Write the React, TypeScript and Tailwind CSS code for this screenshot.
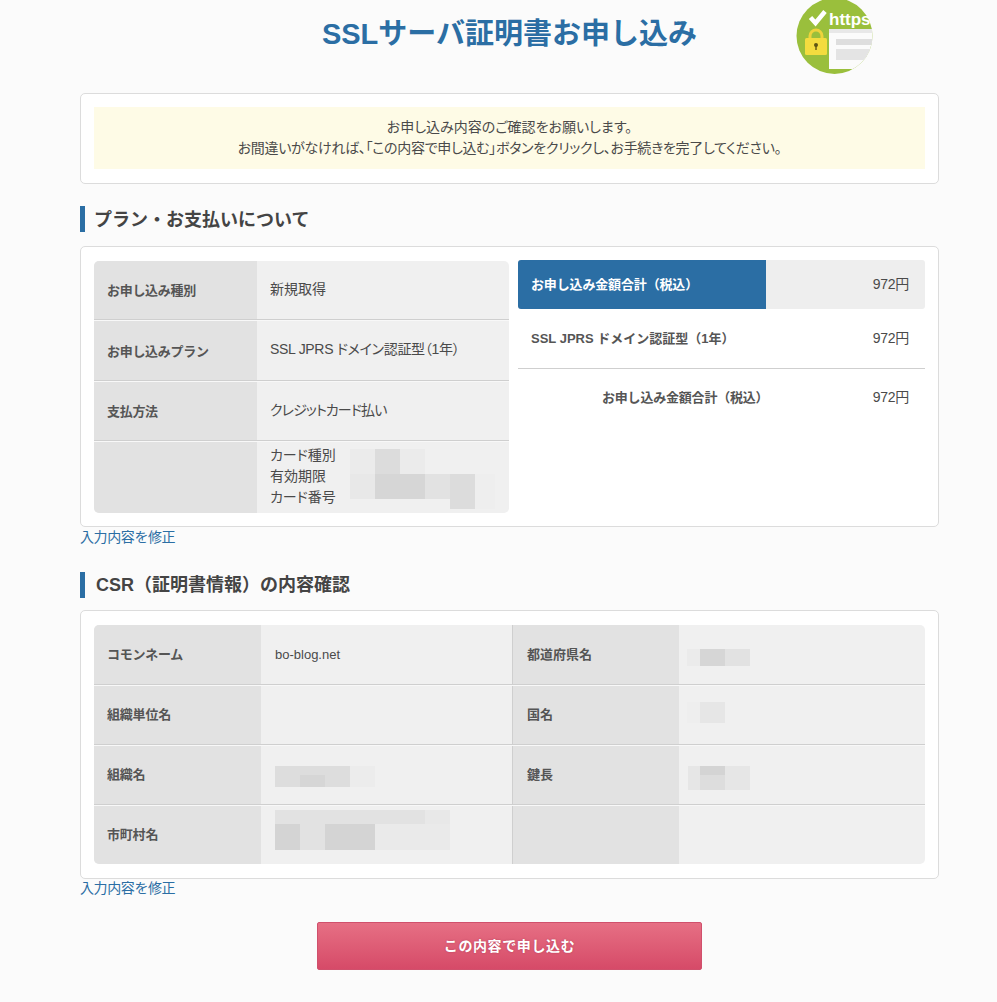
const jp = { fontFamily: '"Liberation Sans","Noto Sans CJK JP",sans-serif' };

function Logo() {
  return (
    <svg width="80" height="76" viewBox="0 0 80 76" className="block">
      <defs>
        <clipPath id="logo-clip"><circle cx="39.500" cy="36" r="38" /></clipPath>
      </defs>
      <circle cx="39.500" cy="36" r="38" fill="#9abf3c" />
      <path d="M15.500 17.500l5 5.500 9.500-11.500" fill="none" stroke="#fff" strokeWidth="4.500" />
      <text x="34" y="25" fill="#fff" fontSize="17" fontWeight="700" fontFamily="Liberation Sans">https</text>
      <path d="M15 40v-4a6 6 0 0 1 12 0v4" fill="none" stroke="#eed33c" strokeWidth="3" />
      <rect x="10" y="38" width="22" height="17" rx="1.500" fill="#f3dc3f" />
      <circle cx="21" cy="45" r="2" fill="#5e5414" />
      <rect x="20.300" y="45" width="1.400" height="5" fill="#5e5414" />
      <g clipPath="url(#logo-clip)">
        <rect x="34" y="29" width="46" height="40" fill="#fbfbfb" />
        <rect x="34" y="29" width="46" height="4" fill="#e8e8e8" />
        <rect x="41" y="39" width="39" height="6" fill="#dedede" />
        <rect x="41" y="49" width="39" height="11" fill="#e4e4e4" />
      </g>
    </svg>
  );
}

function Blur({ rows, h = 0 }: { rows: [number, number, number, number, string][]; h?: number }) {
  return (
    <div className="relative w-full" style={{ height: h }}>
      {rows.map(([x, y, w, hh, c], i) => (
        <div key={i} className="absolute" style={{ left: x, top: y, width: w, height: hh, background: c }} />
      ))}
    </div>
  );
}

function Heading({ children, leading }: { children: React.ReactNode; leading: string }) {
  return (
    <h2 className={`border-l-[5px] border-[#2b6ea4] pl-[9px] h-[26px] ${leading} text-[18px] font-bold text-[#444]`}>
      {children}
    </h2>
  );
}

function Row({ label, last, first, children, h }: { label?: string; last?: boolean; first?: boolean; children?: React.ReactNode; h: string }) {
  return (
    <div className={`flex ${h} ${last ? "" : "border-b border-b-[#cfcfcf]"} ${first ? "" : "border-t border-t-[#f8f8f8]"}`}>
      <div className="w-[163px] shrink-0 bg-[#e2e2e2] pl-[13px] pt-[2px] flex items-center text-[13px] tracking-[-0.3px] font-bold text-[#555]">{label}</div>
      <div className="flex-1 pl-[13px] pb-[2px] flex items-center text-[14px] text-[#4a4a4a] [font-feature-settings:'palt']">{children}</div>
    </div>
  );
}

function CsrRow({ left, right, last, first, h, leftVal, rightVal }: { left: string; right?: string; last?: boolean; first?: boolean; h: string; leftVal?: React.ReactNode; rightVal?: React.ReactNode }) {
  return (
    <div className={`flex ${h} ${last ? "" : "border-b border-b-[#cfcfcf]"} ${first ? "" : "border-t border-t-[#f8f8f8]"}`}>
      <div className="w-[167px] shrink-0 bg-[#e2e2e2] pl-[13px] flex items-center text-[13px] tracking-[-0.2px] font-bold text-[#555]">{left}</div>
      <div className="w-[252px] shrink-0 pl-[14px] flex items-center text-[13px] text-[#4a4a4a] border-r border-r-[#cfcfcf]">{leftVal}</div>
      <div className="w-[166px] shrink-0 bg-[#e2e2e2] pl-[14px] flex items-center text-[13px] font-bold text-[#555]">{right}</div>
      <div className="flex-1 pl-[8px] flex items-center">{rightVal}</div>
    </div>
  );
}

export default function App() {
  return (
    <div className="min-h-[1002px] bg-[#fbfbfb] text-[#444]" style={jp}>
      <div className="w-[859px] ml-[80px]">
        <header className="relative h-[93px]">
          <h1 className="pt-[14px] text-center text-[29px] leading-[40px] font-bold text-[#2b6ea4]">SSLサーバ証明書お申し込み</h1>
          <div className="absolute left-[715px] top-0"><Logo /></div>
        </header>

        <section className="bg-white border border-[#dcdcdc] rounded-[5px] px-[13px] pt-[13px] pb-[14px]">
          <div className="bg-[#fefbe6] h-[62px] flex flex-col items-center justify-center text-[14px] leading-[21px] text-[#4a4a4a] [font-feature-settings:'palt']">
            <p>お申し込み内容のご確認をお願いします。</p>
            <p className="tracking-[-0.3px]">お間違いがなければ、「この内容で申し込む」ボタンをクリックし、お手続きを完了してください。</p>
          </div>
        </section>

        <div className="mt-[22px] mb-[14px]"><Heading leading="leading-[28px]">プラン・お支払いについて</Heading></div>

        <section className="bg-white border border-[#dcdcdc] rounded-[5px] p-[13px] h-[281px] flex gap-[9px]">
          <div className="w-[415px] shrink-0 bg-[#f0f0f0] rounded-[5px] overflow-hidden self-start mt-[1px]">
            <Row first label="お申し込み種別" h="h-[59px]">新規取得</Row>
            <Row label="お申し込みプラン" h="h-[61px]"><span className="tracking-[-0.3px]">SSL JPRS ドメイン認証型（1年）</span></Row>
            <Row label="支払方法" h="h-[60px]"><span className="tracking-[-0.9px]">クレジットカード払い</span></Row>
            <Row last h="h-[72px]">
              <div className="flex w-full items-center">
                <div className="leading-[21px] w-[80px]">
                  <p>カード種別</p><p>有効期限</p><p>カード番号</p>
                </div>
                <div className="flex-1">
                  <Blur h={66} rows={[[0,5,25,25,"#ebebeb"],[25,5,25,25,"#dcdcdc"],[50,5,25,25,"#ebebeb"],[0,30,25,25,"#e8e8e8"],[25,30,50,25,"#d6d6d6"],[75,30,25,25,"#e2e2e2"],[100,30,25,35,"#dcdcdc"],[125,30,20,35,"#eeeeee"]]} />
                </div>
              </div>
            </Row>
          </div>

          <div className="flex-1 text-[13px]">
            <div className="flex h-[49px] bg-[#eeeeee] rounded-[3px] overflow-hidden items-center">
              <div className="w-[248px] h-full bg-[#2b6ea4] text-white font-bold flex items-center pl-[13px] tracking-[-0.15px]">お申し込み金額合計（税込）</div>
              <div className="flex-1 text-right pr-[16px] text-[14px] tracking-[-0.3px] text-[#4a4a4a]">972円</div>
            </div>
            <div className="flex h-[60px] items-center justify-between pl-[13px] pr-[16px] border-b border-[#cfcfcf]">
              <span className="font-bold text-[#555]">SSL JPRS ドメイン認証型（1年）</span>
              <span className="text-[14px] tracking-[-0.3px] text-[#4a4a4a]">972円</span>
            </div>
            <div className="flex h-[57px] items-center justify-between pl-[84px] pr-[16px]">
              <span className="font-bold text-[#555] tracking-[-0.2px]">お申し込み金額合計（税込）</span>
              <span className="text-[14px] tracking-[-0.3px] text-[#4a4a4a]">972円</span>
            </div>
          </div>
        </section>
        <a className="block text-[14px] leading-[20px] tracking-[-0.4px] text-[#2b6ea4]">入力内容を修正</a>

        <div className="mt-[25px] mb-[12px]"><Heading leading="leading-[26px]"><span className="ml-[2px]">CSR（証明書情報）の内容確認</span></Heading></div>

        <section className="bg-white border border-[#dcdcdc] rounded-[5px] px-[13px] py-[14px] h-[269px]">
          <div className="bg-[#f0f0f0] rounded-[5px] overflow-hidden">
            <CsrRow first h="h-[60px]" left="コモンネーム" right="都道府県名" leftVal="bo-blog.net"
              rightVal={<div className="w-[65px] mt-[6px]"><Blur h={17} rows={[[0,0,13,17,"#ebebeb"],[13,0,25,17,"#d6d6d6"],[38,0,25,17,"#e2e2e2"]]} /></div>} />
            <CsrRow h="h-[60px]" left="組織単位名" right="国名"
              rightVal={<div className="w-[65px] mb-[5px]"><Blur h={21} rows={[[0,0,13,21,"#eeeeee"],[13,0,25,21,"#e6e6e6"]]} /></div>} />
            <CsrRow h="h-[60px]" left="組織名" right="鍵長"
              leftVal={<div className="w-[100px] mt-[3px]"><Blur h={21} rows={[[0,0,75,21,"#dddddd"],[25,9,25,12,"#d6d6d6"],[75,0,25,21,"#ececec"]]} /></div>}
              rightVal={<div className="w-[65px] mt-[6px]"><Blur h={24} rows={[[1,0,62,24,"#e6e6e6"],[13,0,25,9,"#d4d4d4"],[13,9,25,15,"#dddddd"]]} /></div>} />
            <CsrRow last h="h-[59px]" left="市町村名"
              leftVal={<div className="w-[175px] mb-[10px]"><Blur h={40} rows={[[0,0,150,14,"#e2e2e2"],[150,0,25,14,"#e8e8e8"],[0,14,25,26,"#d4d4d4"],[25,14,25,26,"#e2e2e2"],[50,14,50,26,"#d4d4d4"],[100,14,75,26,"#eaeaea"]]} /></div>} />
          </div>
        </section>
        <a className="block text-[14px] leading-[20px] -mt-[1px] tracking-[-0.4px] text-[#2b6ea4]">入力内容を修正</a>

        <div className="mt-[24px] flex justify-center">
          <button className="w-[385px] h-[48px] rounded-[2px] border border-[#d0506c] bg-gradient-to-b from-[#e66f84] to-[#d64a68] text-white font-bold text-[14px] tracking-[0.6px] [text-shadow:0_0_2px_rgba(120,30,50,0.4)]">この内容で申し込む</button>
        </div>
      </div>
    </div>
  );
}
